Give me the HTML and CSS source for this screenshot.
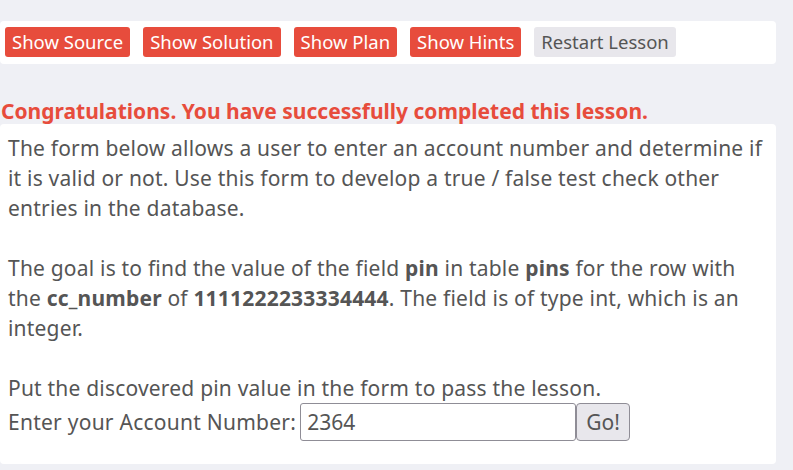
FILE: index.html
```html
<!DOCTYPE html>
<html>
<head>
<meta charset="utf-8">
<link rel="stylesheet" href="styles.css">
</head>
<body>
<div class="page">
  <div class="toolbar">
    <button class="btn btn-red">Show Source</button>
    <button class="btn btn-red">Show Solution</button>
    <button class="btn btn-red">Show Plan</button>
    <button class="btn btn-red">Show Hints</button>
    <button class="btn btn-grey">Restart Lesson</button>
  </div>
  <div class="feedback">Congratulations. You have successfully completed this lesson.</div>
  <div class="lesson">
    <p class="text">The form below allows a user to enter an account number and determine if it is valid or not. Use this form to develop a true / false test check other entries in the database.<br><br>The goal is to find the value of the field <b>pin</b> in table <b>pins</b> for the row with the <b>cc_number</b> of <b>1111222233334444</b>. The field is of type int, which is an integer.<br><br>Put the discovered pin value in the form to pass the lesson.</p>
    <form class="form">
      <label class="label" for="acct">Enter your Account Number:</label>
      <input class="input" id="acct" type="text" value="2364">
      <button class="go" type="button">Go!</button>
    </form>
  </div>
</div>
</body>
</html>
```
FILE: styles.css
```css
html, body {
  margin: 0;
  padding: 0;
  background: #eff0f5;
}
body {
  font-family: "Noto Sans", "Open Sans", sans-serif;
  color: #555;
}
.page {
  width: 776px;
  padding-top: 21px;
}
.toolbar {
  background: #fff;
  border-radius: 4px;
  padding: 6px 5px 7px;
  display: flex;
  gap: 13px;
  height: 30px;
}
.btn {
  font-family: inherit;
  font-size: 18.5px;
  line-height: 30px;
  height: 30px;
  padding: 0 7px;
  border: none;
  border-radius: 3px;
  cursor: pointer;
}
.btn-red {
  background: #e74c3c;
  color: #fff;
}
.btn-grey {
  background: #e8e7ec;
  color: #555;
}
.feedback {
  margin-top: 34px;
  padding-left: 1px;
  color: #e74c3c;
  font-weight: bold;
  font-size: 21px;
  line-height: 26px;
  height: 26px;
  white-space: nowrap;
}
.lesson {
  background: #fff;
  border-radius: 4px;
  padding: 9px 8px 23px;
}
.text {
  margin: 0;
  font-size: 21px;
  letter-spacing: 0.2px;
  line-height: 30px;
}
.form {
  display: flex;
  align-items: center;
  margin: 0;
}
.label {
  font-size: 21px;
  letter-spacing: 0.25px;
  line-height: 38px;
  margin-right: 4px;
}
.input {
  width: 276px;
  height: 38px;
  box-sizing: border-box;
  border: 1px solid #8f8d96;
  border-radius: 3px;
  font-family: inherit;
  font-size: 21px;
  color: #555;
  padding: 0 6px;
}
.go {
  height: 38px;
  width: 54px;
  box-sizing: border-box;
  border: 1px solid #8f8d96;
  border-radius: 4px;
  background: #e8e7ec;
  font-family: inherit;
  font-size: 21px;
  color: #555;
  padding: 0;
}
```
